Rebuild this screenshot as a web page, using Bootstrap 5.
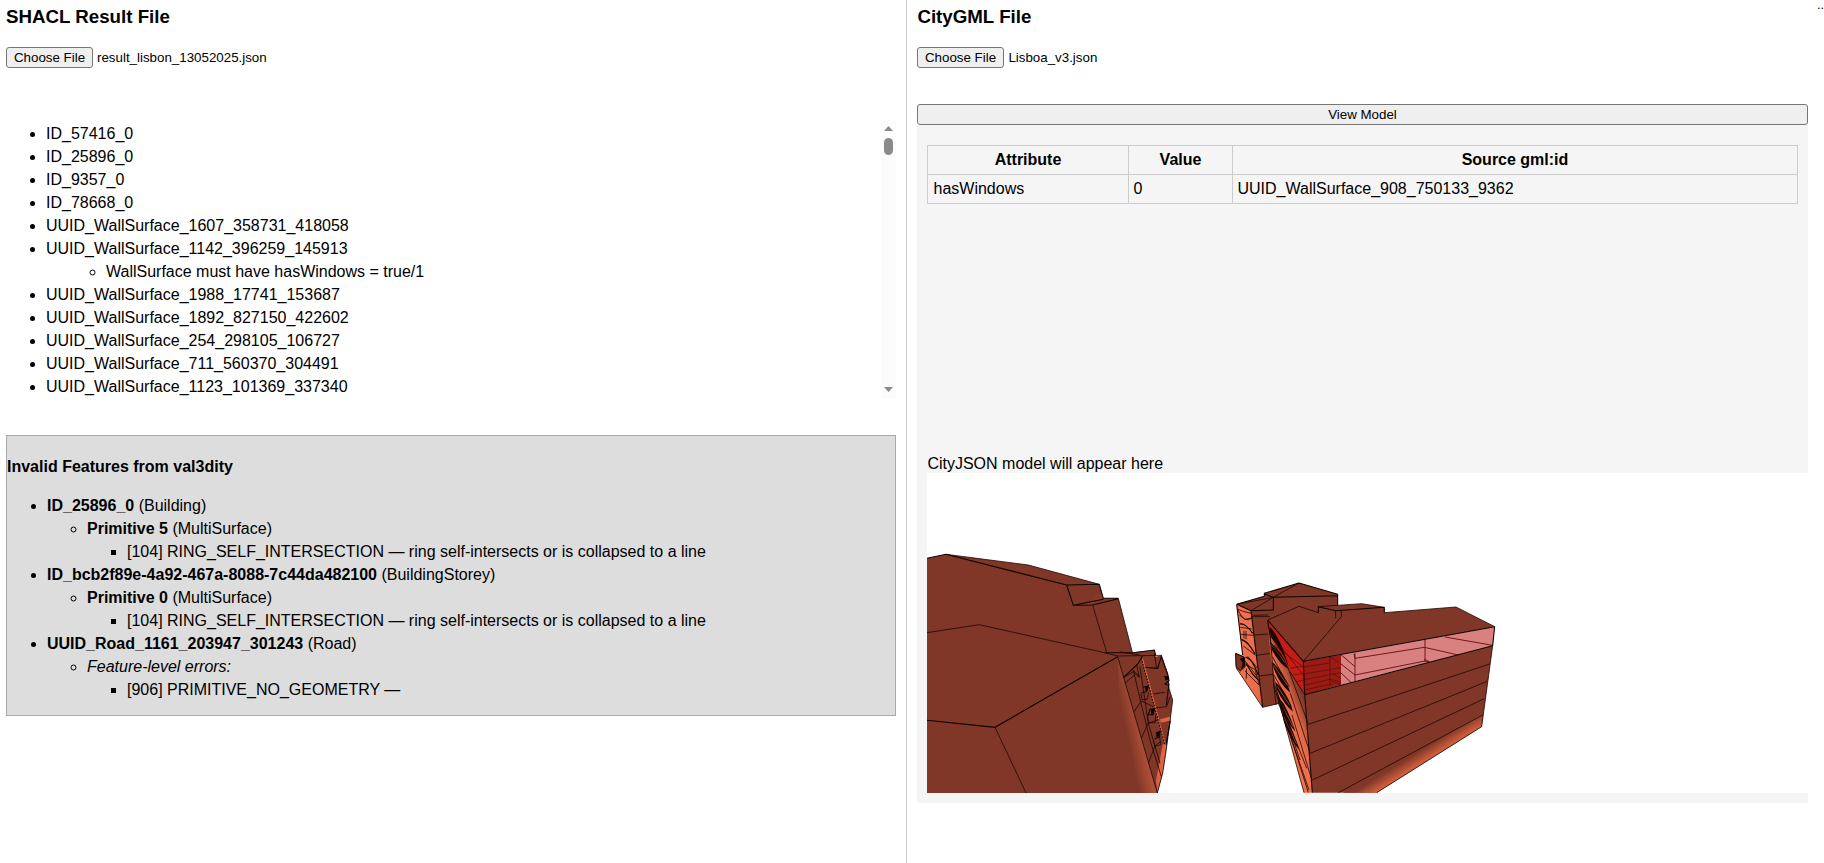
<!DOCTYPE html>
<html lang="en">
<head>
<meta charset="utf-8">
<title>SHACL Result Viewer</title>
<link href="https://cdn.jsdelivr.net/npm/bootstrap@5.3.0/dist/css/bootstrap.min.css" rel="stylesheet">
<style>
body{font-family:"Liberation Sans",Arial,sans-serif;font-size:16px;line-height:23px;color:#000;background:#fff}
.pane-left{width:907px;padding:6px 10px 0 6px;border-right:1px solid #ccc}
.pane-right{width:901px;padding:6px 0 0 10px}
.pane-right .pane-title,.pane-right .file-row span,.model-caption{padding-left:.4px}
.pane-title{font-size:18.72px;line-height:21px;font-weight:700;margin:0 0 20px}
.plain-btn{font-size:13.333px;line-height:15px;padding:2px 7px;border:1px solid #767676;border-radius:3px;background:#efefef;color:#000;height:21px;white-space:nowrap}
.file-row{height:21px;font-size:13.333px;line-height:21px;gap:4px}
.file-row .plain-btn{width:87px;padding:2px 0}
.result-scroll{height:279px;margin-top:52px}
.result-scroll ul{padding:2px 0 0 40px}
.result-scroll ul ul{padding:0 0 0 60px}
.val-box{margin-top:36px;height:281px;border:1px solid #a9a9a9;background:#ddd;padding-top:19px}
.val-box h4{font-size:16px;line-height:23px;font-weight:700;margin:0 0 16px}
.val-box ul{padding-left:40px}
.model-btn{margin-top:36px}
.model-panel{background:#f5f5f5;height:678px;padding:20px 0 0 10px}
.attr-area{height:307px}
.model-caption{height:21px}
.attr-table{width:871px;table-layout:fixed;border-collapse:collapse}
.attr-table th,.attr-table td{border:1px solid #ccc;padding:3px 4.500px;height:29px;line-height:22px}
.attr-table td:first-child{padding-left:5.500px}
.attr-table th{text-align:center}
.overflow-dots{width:16px;padding-left:9.100px;font-size:12.500px;line-height:11px}
.edge{fill:none;stroke:#0c0301;stroke-width:3.2}
.thin{fill:none;stroke:#1c0804;stroke-width:2.400}
</style>
</head>
<body class="overflow-hidden">
<main class="d-flex vh-100 overflow-hidden">
<section class="pane-left flex-shrink-0">
  <h3 class="pane-title">SHACL Result File</h3>
  <div class="file-row d-flex"><button class="plain-btn">Choose File</button><span>result_lisbon_13052025.json</span></div>
  <div class="result-scroll d-flex overflow-hidden">
    <ul class="flex-grow-1 mb-0">
      <li>ID_57416_0</li><li>ID_25896_0</li><li>ID_9357_0</li><li>ID_78668_0</li>
      <li>UUID_WallSurface_1607_358731_418058</li>
      <li>UUID_WallSurface_1142_396259_145913<ul><li>WallSurface must have hasWindows = true/1</li></ul></li>
      <li>UUID_WallSurface_1988_17741_153687</li>
      <li>UUID_WallSurface_1892_827150_422602</li>
      <li>UUID_WallSurface_254_298105_106727</li>
      <li>UUID_WallSurface_711_560370_304491</li>
      <li>UUID_WallSurface_1123_101369_337340</li>
    </ul>
    <svg class="flex-shrink-0" width="15" height="279"><path fill="#fcfcfc" d="M0 0h15v279H0z"/><path fill="#8b8b8b" d="M3 11 7.500 6 12 11zM3 267h9l-4.500 5z"/><rect x="3" y="18" width="9" height="17" rx="4.500" fill="#8b8b8b"/></svg>
  </div>
  <div class="val-box">
    <h4>Invalid Features from val3dity</h4>
    <ul class="mb-0">
      <li><b>ID_25896_0</b> (Building)<ul><li><b>Primitive 5</b> (MultiSurface)<ul><li>[104] RING_SELF_INTERSECTION — ring self-intersects or is collapsed to a line</li></ul></li></ul></li>
      <li><b>ID_bcb2f89e-4a92-467a-8088-7c44da482100</b> (BuildingStorey)<ul><li><b>Primitive 0</b> (MultiSurface)<ul><li>[104] RING_SELF_INTERSECTION — ring self-intersects or is collapsed to a line</li></ul></li></ul></li>
      <li><b>UUID_Road_1161_203947_301243</b> (Road)<ul><li><i>Feature-level errors:</i><ul><li>[906] PRIMITIVE_NO_GEOMETRY —</li></ul></li></ul></li>
    </ul>
  </div>
</section>
<section class="pane-right flex-shrink-0">
  <h3 class="pane-title">CityGML File</h3>
  <div class="file-row d-flex"><button class="plain-btn">Choose File</button><span>Lisboa_v3.json</span></div>
  <button class="plain-btn model-btn w-100 d-block">View Model</button>
  <div class="model-panel">
    <div class="attr-area">
      <table class="attr-table">
        <colgroup><col style="width:201px"><col style="width:104px"><col></colgroup>
        <tr><th>Attribute</th><th>Value</th><th>Source gml:id</th></tr>
        <tr><td>hasWindows</td><td>0</td><td>UUID_WallSurface_908_750133_9362</td></tr>
      </table>
    </div>
    <div class="model-caption">CityJSON model will appear here</div>
    <svg class="d-block" width="881" height="320" viewBox="927 473 881 320">
      <defs>
        <linearGradient id="gl" gradientUnits="userSpaceOnUse" x1="634" y1="950" x2="690" y2="938"><stop offset="0" stop-color="#803728"/><stop offset="1" stop-color="#bd553b"/></linearGradient>
        <linearGradient id="gb" gradientUnits="userSpaceOnUse" x1="668" y1="567" x2="688" y2="599"><stop offset="0" stop-color="#803728"/><stop offset="1" stop-color="#d9633f"/></linearGradient>
        <linearGradient id="gw" gradientUnits="userSpaceOnUse" x1="270" y1="480" x2="325" y2="460"><stop offset="0" stop-color="#f0704d"/><stop offset=".4" stop-color="#df6644"/><stop offset="1" stop-color="#803728"/></linearGradient>
        <linearGradient id="gs" x1="0" x2="1"><stop offset="0" stop-color="#803728"/><stop offset="1" stop-color="#e86846"/></linearGradient>
        <linearGradient id="go" x1="0" x2="1"><stop offset="0" stop-color="#f27451"/><stop offset=".85" stop-color="#e96b48"/><stop offset="1" stop-color="#c95a3e"/></linearGradient>
      </defs>
      <rect x="927" y="473" width="881" height="320" fill="#fff"/>
      <!-- near building -->
      <g transform="translate(920 440) scale(.33333)">
        <path fill="#803728" d="M21 355 78 343 325 375 538 433 550 475 595 475 637 637 703 630 707 650 724 646 744 705 747 745 758 780 750 845 738 935 728 1000 712 1059H21z"/>
        <path fill="url(#gl)" d="M593 650 712 1059H625L600 840z"/>
        <path fill="url(#gs)" d="M515 463 545 464 550 477 515 484zM720 838 750 830 749 842 722 848zM728 915 740 905 728 1000 712 1057 708 1020z"/>
        <path class="edge" d="M21 355 78 343 440 435 538 433M440 435 460 496 518 495 595 476M460 496 550 478M21 841 225 862 593 650M538 433 550 475H595M555 638 640 638 703 630 707 645M667 648 655 670 610 713M672 682 713 685 724 650 744 705"/>
        <path class="thin" d="M593 650 712 1059M595 475 637 637M78 343 325 375 538 433M518 495 560 638M21 578 178 554 540 635 593 648 725 646M225 862 318 1059M600 636 660 645M703 640 710 685M724 646 744 705 747 745 758 780 750 845 738 935 728 1000 712 1059M640 690 662 785 690 900 724 1010M660 680 685 850 720 970M610 713 642 694 658 708M642 815 664 783 700 800M664 895 684 850 712 840M685 970 705 917 722 905M650 675 658 712 640 697M700 762 735 757M704 804 740 800 750 770M614 730 645 704"/>
        <path fill="none" stroke="#e06845" stroke-width="4" d="M667 656 734 908"/>
        <path class="edge" stroke-dasharray="5 4" d="M664 655 734 912"/>
        <path class="edge" d="M670 742 685 738 679 755 665 758M684 828 690 808 704 806 698 825 682 823M707 880 720 874 719 890 704 897M733 710 745 709 747 722 735 732 743 736M747 730 739 795M751 842 738 914"/>
        <path class="thin" d="M663 760 666 779 682 778 686 757M683 830 686 849 706 848 707 824M700 900 705 919 722 914 719 891"/>
        <path fill="#0c0301" d="M676 740 686 738 682 752 676 754zM692 808 704 806 700 824 694 824zM709 877 720 874 717 888 709 892zM734 709 744 708 746 718 736 722z"/>
      </g>
      <!-- far buildings -->
      <g transform="translate(1200 560) scale(.33333)" stroke-linejoin="round">
        <path fill="#803728" d="M110 133 193 109V100L297 69 413 103V165L240 430 188 442 150 160z"/>
        <path fill="url(#go)" d="M110 135 153 152 188 442 108 323 106 280 128 285z"/>
        <path class="edge" d="M110 133 153 152 188 442M110 133 193 109V100L297 69 413 103V140M110 133 128 285M153 152 220 150V112L413 107M193 102 220 112"/>
        <path class="thin" d="M108 323 188 442M220 112 297 69M110 133 220 112 153 152M158 166 205 165M163 225 206 222M168 286 215 280M178 348 220 343M188 442 238 430M221 370 228 435M232 390 237 437M155 170 210 170"/>
        <path class="thin" d="M112 147 132 155 155 160M118 165 135 178 157 174M114 150Q135 195 157 172M121 190 134 194 158 218M121 202 155 207M122 223 160 226M124 237 141 246 165 280M130 258 167 286M136 293 145 291 173 325M135 302 173 352M137 315 165 328 177 373M135 333 178 376M132 212V235M138 212V238M139 326V356M155 340 172 358"/>
        <path class="edge" d="M120 192Q138 190 158 220M124 239Q145 245 165 282M138 292Q160 300 174 345M138 310Q160 350 178 362"/>
        <path d="M107 280 133 292 135 320 121 333 108 320z" fill="#7d3424" stroke="#120502" stroke-width="3"/>
        <path d="M119 296 132 292 136 314 123 330 128 308z" fill="#160502"/>
        <path fill="url(#gw)" d="M203 182 310 304 314 404 337 698H312L238 430 212 290z"/>
        <path fill="#c51d15" d="M203 183 310 304 314 404 270 335 210 225z"/>
        <path fill="#9a1b14" d="M310 304 423 284V374L314 404z"/>
        <path fill="#d98080" d="M423 284 884 200 878 257 423 374z"/>
        <path fill="#803728" d="M203 180 297 139 355 158V140L485 131 553 142V158L768 141 884 200 310 304zM314 404 878 257 845 500 530 698H337z"/>
        <path fill="url(#gb)" d="M845 462V500L530 698H430z"/>
        <path fill="none" stroke="#681010" stroke-width="2.800" d="M462 281 465 295 673 262M465 281V366M465 345 675 303 690 307M675 239V306M673 262 775 285M735 231 878 256M423 284 465 320M423 312 465 345M423 339 454 368M673 298 688 305"/>
        <path fill="none" stroke="#5f0e0a" stroke-width="2.200" d="M390 292V378M312 321 390 309M312 342 423 323M312 359 423 338M312 376 390 358 423 366M390 290 423 312M395 340 423 355M395 364 423 374M313 390 395 372M208 216 310 345M222 255 311 322M270 325 310 318M280 345 311 340M290 365 312 360"/>
        <path class="edge" d="M203 180 310 304 884 200 878 257 314 404 310 304M203 182 210 225 215 280M314 404 337 698M355 158V140L407 152 553 142M553 142V158"/>
        <path class="thin" d="M215 280 222 380 238 430 312 698M203 180 297 139 355 158M355 140 485 131 553 142M553 158 768 141 884 200M310 304 424 170V152M407 152V175M878 257 845 500 530 698M325 493 869 312M330 580 862 364M337 660 853 416M415 698 848 465M270 335 314 404M262 318 325 493M271 400 330 578M276 465 334 655M235 410 325 698"/>
        <path fill="#1a0703" d="M208 200Q240 228 266 320 245 270 213 232zM213 248Q250 280 264 325 240 315 216 270zM217 305 235 325 Q260 360 271 398 240 375 221 325zM226 365 245 385Q268 415 279 455 255 438 230 388zM234 410 252 432Q274 475 286 515 262 487 240 440zM246 455 262 478Q284 530 298 570 274 545 252 485z"/>
        <path fill="none" stroke="#e96b48" stroke-width="1.800" d="M215 254 255 308M221 316 262 375M232 379 269 436M240 424 279 500M252 471 290 552"/>
        <path class="thin" d="M213 248 262 325M217 290 268 380M222 345 274 440M232 400 320 625M238 435 327 690M226 380 300 600"/>
      </g>
    </svg>
  </div>
</section>
<div class="overflow-dots flex-shrink-0">..</div>
</main>
<script src="https://cdn.jsdelivr.net/npm/bootstrap@5.3.0/dist/js/bootstrap.bundle.min.js"></script>
</body>
</html>
